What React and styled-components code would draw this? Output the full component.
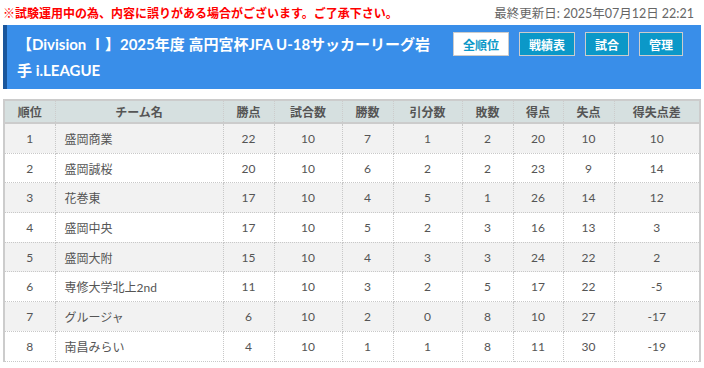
import React from "react";
import styled, { createGlobalStyle } from "styled-components";

const Global = createGlobalStyle`
  html, body { margin: 0; padding: 0; background: #fff; }
  body { font-family: Lato, "Noto Sans CJK JP", sans-serif; color: #555; }
`;

const Page = styled.div`
  width: 704px;
  padding: 0 3px;
  box-sizing: border-box;
`;

const TopBar = styled.div`
  display: flex;
  justify-content: space-between;
  align-items: center;
  height: 25px;
  font-size: 12px;
  padding-right: 7px;
`;

const Notice = styled.span`
  color: #ff0000;
  font-weight: bold;
`;

const Updated = styled.span`
  color: #666;
  font-size: 12.5px;
`;

const Header = styled.div`
  display: flex;
  align-items: flex-start;
  background: #398ee9;
  border-left: 4px solid #19569c;
  padding: 6px 18px 6px 10px;
  height: 64px;
  box-sizing: border-box;
  gap: 18px;
`;

const Title = styled.h1`
  flex: 1;
  margin: 0;
  color: #fff;
  font-size: 15px;
  line-height: 26px;
  font-weight: bold;
`;

const Buttons = styled.div`
  display: flex;
  gap: 10px;
  margin-top: 1px;
`;

const Btn = styled.a`
  display: inline-flex;
  align-items: center;
  justify-content: center;
  height: 24px;
  padding: 0 9px;
  box-sizing: border-box;
  border: 1px solid #ccc;
  font-size: 12px;
  font-weight: bold;
  text-decoration: none;
  background: ${(p) => (p.$active ? "#fff" : "#0b98c8")};
  color: ${(p) => (p.$active ? "#0b98c8" : "#fff")};
`;

const Table = styled.table`
  margin-top: 10px;
  width: 698px;
  border-collapse: collapse;
  table-layout: fixed;
  font-size: 12px;
  border-left: 2px solid #ccc;
  border-right: 2px solid #ccc;
`;

const Th = styled.th`
  height: 21px;
  padding: 0;
  background: #d6e0e0;
  color: #555;
  font-weight: bold;
  border-top: 2px solid #ccc;
  border-bottom: 2px solid #ccc;
  border-left: 1px dotted #ccc;
  border-right: 1px dotted #ccc;
`;

const Tr = styled.tr`
  background: ${(p) => (p.$odd ? "#f2f2f2" : "#fff")};
`;

const Td = styled.td`
  height: 28.7px;
  padding: 0;
  text-align: ${(p) => (p.$left ? "left" : "center")};
  padding-left: ${(p) => (p.$left ? "9px" : "0")};
  border: 1px dotted #c8c8c8;
  color: #555;
`;

const cols = [
  ["順位", 51],
  ["チーム名", 168],
  ["勝点", 51],
  ["試合数", 68],
  ["勝数", 51],
  ["引分数", 69],
  ["敗数", 51],
  ["得点", 50],
  ["失点", 51],
  ["得失点差", 86],
];

const rows = [
  [1, "盛岡商業", 22, 10, 7, 1, 2, 20, 10, 10],
  [2, "盛岡誠桜", 20, 10, 6, 2, 2, 23, 9, 14],
  [3, "花巻東", 17, 10, 4, 5, 1, 26, 14, 12],
  [4, "盛岡中央", 17, 10, 5, 2, 3, 16, 13, 3],
  [5, "盛岡大附", 15, 10, 4, 3, 3, 24, 22, 2],
  [6, "専修大学北上2nd", 11, 10, 3, 2, 5, 17, 22, -5],
  [7, "グルージャ", 6, 10, 2, 0, 8, 10, 27, -17],
  [8, "南昌みらい", 4, 10, 1, 1, 8, 11, 30, -19],
];

export default function App() {
  return (
    <Page>
      <Global />
      <TopBar>
        <Notice>※試験運用中の為、内容に誤りがある場合がございます。ご了承下さい。</Notice>
        <Updated>最終更新日: 2025年07月12日 22:21</Updated>
      </TopBar>
      <Header>
        <Title>【Division Ⅰ】2025年度 高円宮杯JFA U-18サッカーリーグ岩手 i.LEAGUE</Title>
        <Buttons>
          <Btn $active>全順位</Btn>
          <Btn>戦績表</Btn>
          <Btn>試合</Btn>
          <Btn>管理</Btn>
        </Buttons>
      </Header>
      <Table>
        <colgroup>
          {cols.map(([n, w]) => (
            <col key={n} style={{ width: w }} />
          ))}
        </colgroup>
        <thead>
          <tr>
            {cols.map(([n]) => (
              <Th key={n}>{n}</Th>
            ))}
          </tr>
        </thead>
        <tbody>
          {rows.map((r, i) => (
            <Tr key={r[0]} $odd={i % 2 === 0}>
              {r.map((v, j) => (
                <Td key={j} $left={j === 1}>
                  {v}
                </Td>
              ))}
            </Tr>
          ))}
        </tbody>
      </Table>
    </Page>
  );
}
